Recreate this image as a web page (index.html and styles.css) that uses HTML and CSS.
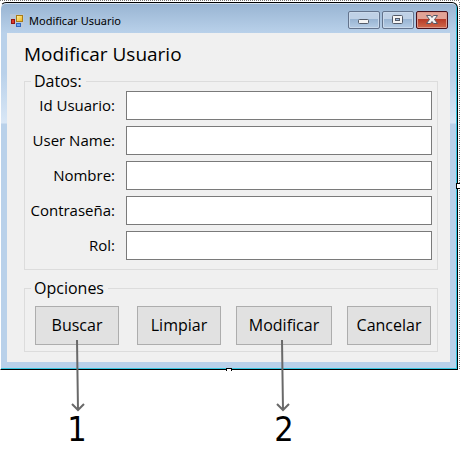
FILE: index.html
```html
<!DOCTYPE html>
<html lang="es">
<head>
<meta charset="utf-8">
<title>Modificar Usuario</title>
<link rel="stylesheet" href="styles.css">
</head>
<body>
<div class="surface">
<main class="window">
  <header class="titlebar">
    <svg class="app-icon" width="14" height="14" viewBox="0 0 14 14" aria-hidden="true">
      <defs>
        <linearGradient id="gold" x2="1" y2="1"><stop stop-color="#fff6b0"/><stop offset="1" stop-color="#efb010"/></linearGradient>
      </defs>
      <path d="M0 0h14v14H0z" fill="#c3cbd6" opacity=".55"/>
      <rect x="6.5" y="1.5" width="6" height="6" fill="url(#gold)" stroke="#a87b16"/>
      <rect x="1.5" y="5.5" width="3" height="4" fill="#d9382a" stroke="#94150f"/>
      <rect x="6.5" y="9.5" width="4" height="3" fill="#69a2f5" stroke="#3467bd"/>
    </svg>
    <span class="caption">Modificar Usuario</span>
    <div class="controls">
      <button class="control" type="button" aria-label="Minimizar"><svg width="12" height="12" viewBox="0 0 12 12"><rect x=".5" y="5.5" width="10" height="4" rx="1" fill="#f4f4f4" stroke="#525a68"/></svg></button>
      <button class="control" type="button" aria-label="Maximizar"><svg width="12" height="12" viewBox="0 0 12 12"><rect x=".5" y="1.5" width="10" height="8" rx="1" fill="#f4f4f4" stroke="#525a68"/><rect x="3.5" y="4.5" width="4" height="2" fill="#9fbbe0" stroke="#525a68"/></svg></button>
      <button class="control control-close" type="button" aria-label="Cerrar"><svg width="12" height="12" viewBox="0 0 12 12"><path d="M.5 1.5h4L6 3.500 7.500 1.500h4L8.500 5.500l3 4h-4L6 7.500l-1.500 2h-4l3-4z" fill="#f4f4f4" stroke="#555866"/></svg></button>
    </div>
  </header>
  <form class="client">
    <h1 class="heading">Modificar Usuario</h1>
    <fieldset class="group fields">
      <legend>Datos:</legend>
      <label for="id">Id Usuario:</label><input id="id" type="text">
      <label for="user">User Name:</label><input id="user" type="text">
      <label for="name">Nombre:</label><input id="name" type="text">
      <label for="pass">Contraseña:</label><input id="pass" type="text">
      <label for="role">Rol:</label><input id="role" type="text">
    </fieldset>
    <fieldset class="group options">
      <legend>Opciones</legend>
      <div class="actions">
        <div class="action action-first">
          <button class="btn" type="button">Buscar</button>
          <div class="callout">
            <svg width="16" height="72" viewBox="0 0 16 72" aria-hidden="true"><path d="M8 0L9 70M3 64l6 6 6-6" fill="none" stroke="#696969" stroke-width="2"/></svg>
            <span>1</span>
          </div>
        </div>
        <div class="action"><button class="btn" type="button">Limpiar</button></div>
        <div class="action action-wide">
          <button class="btn" type="button">Modificar</button>
          <div class="callout">
            <svg width="16" height="72" viewBox="0 0 16 72" aria-hidden="true"><path d="M6 0L7 70M1 64l6 6 6-6" fill="none" stroke="#696969" stroke-width="2"/></svg>
            <span>2</span>
          </div>
        </div>
        <div class="action"><button class="btn" type="button">Cancelar</button></div>
      </div>
    </fieldset>
  </form>
  <i class="handle handle-right"></i>
  <i class="handle handle-bottom"></i>
</main>
</div>
</body>
</html>
```
FILE: styles.css
```css
* { box-sizing: border-box; }

body {
  margin: 0;
  padding-bottom: 80px;
  background: #fff;
  color: #000;
  font: 15px/20px "Open Sans", "Noto Sans", sans-serif;
}

/* Designer selection outline: dots along the top and right edges */
.surface {
  padding: 2px 2px 0 0;
  background:
    repeating-linear-gradient(90deg, #777 0 1px, #fff 1px 2px) top / 100% 1px no-repeat,
    repeating-linear-gradient(#777 0 1px, #fff 1px 2px) right / 1px 100% no-repeat;
}

.window {
  position: relative;
  padding: 0 7px 7px 6px;
  border: 1px solid #000;
  border-left-color: #fff;
  border-radius: 6px 6px 0 0;
  background: linear-gradient(#98b4d2, #b9d1ea 30px, #b9d1ea 70px, #d9e7f6 120px, #b9d1ea 121px);
  box-shadow: inset -1px -1px #35c5df, inset 0 1px #d9e5f1;
}

.titlebar {
  display: flex;
  align-items: center;
  gap: 5px;
  height: 30px;
  padding: 5px 2px 0 3px;
}

.caption {
  flex: 1;
  font: 11px/16px "Noto Sans", sans-serif;
}

.controls {
  display: flex;
  gap: 2px;
  padding-bottom: 1px;
}

.control {
  display: grid;
  place-items: center;
  width: 32px;
  height: 18px;
  padding: 0;
  border: 1px solid #63738c;
  border-radius: 2px;
  background: linear-gradient(#bfd1e6 45%, #98b4d2 45%, #b5cce5);
  box-shadow: inset 0 0 0 1px #c9d9eb;
}

.control-close {
  border-color: #48101b;
  background: linear-gradient(#e2a396 45%, #b73a27 45%, #cf694b);
  box-shadow: inset 0 0 0 1px #dd9a8c;
}

.client {
  padding: 8px 12px 10px 17px;
  background: #f0f0f0;
}

.heading {
  margin: 0 0 3px;
  font-size: 19px;
  font-weight: 400;
  line-height: 26px;
}

.group {
  min-width: 0;
  margin: 0;
  border: 1px solid #dcdcdc;
}

legend {
  margin: 0;
  padding: 0 4px 0 3px;
  font-size: 16px;
  line-height: 22px;
}

.fields {
  display: grid;
  grid-template-columns: 84px 1fr;
  gap: 6px 11px;
  align-items: center;
  padding: 0 5px 9px 6px;
}

.fields legend { margin-bottom: -1px; }

.fields label {
  display: flex;
  justify-content: flex-end;
  padding-bottom: 2px;
  white-space: nowrap;
}

.fields input {
  width: 100%;
  min-width: 0;
  height: 29px;
  padding: 2px 6px;
  border: 1px solid #7a7a7a;
  background: #fff;
  font: inherit;
}

.options {
  margin-top: 7px;
  padding: 0 6px 6px;
}

.actions {
  display: flex;
  justify-content: space-between;
  padding: 7px 0 0 4px;
}

.action {
  position: relative;
  width: 84px;
}

.action-first { margin-right: 3px; }
.action-wide { width: 96px; }

.btn {
  width: 100%;
  height: 39px;
  padding: 0 0 2px;
  border: 1px solid #adadad;
  background: #e1e1e1;
  color: #000;
  font: 16px/22px "Open Sans", "Noto Sans", sans-serif;
}

.callout {
  position: absolute;
  top: 34px;
  left: 0;
  display: flex;
  flex-direction: column;
  align-items: center;
  width: 100%;
  pointer-events: none;
}

.callout span {
  font: 34px/34px "DejaVu Sans Condensed", "DejaVu Sans", sans-serif;
}

.handle {
  position: absolute;
  border: 1px solid #000;
  background: #fff;
}

.handle-right {
  top: calc(50% - 3px);
  right: -3px;
  width: 4px;
  height: 6px;
  border-right: 0;
}

.handle-bottom {
  bottom: -2px;
  left: calc(50% - 3px);
  width: 6px;
  height: 3px;
  border-bottom: 0;
}
```
